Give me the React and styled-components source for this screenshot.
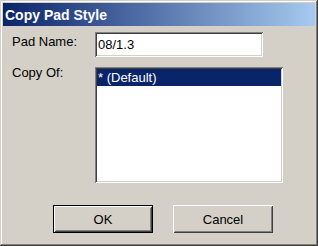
import styled, { createGlobalStyle } from "styled-components";

const GlobalStyle = createGlobalStyle`
  html, body {
    margin: 0;
    padding: 0;
    background: #d4d0c8;
  }
  body {
    font-family: "Liberation Sans", Arial, sans-serif;
    font-size: 13px;
    color: #000;
  }
`;

const Window = styled.div`
  width: 318px;
  height: 246px;
  box-sizing: border-box;
  padding: 3px;
  background: #d4d0c8;
  box-shadow: inset -1px -1px #404040, inset 1px 1px #d4d0c8,
    inset -2px -2px #808080, inset 2px 2px #ffffff;
  display: flex;
  flex-direction: column;
`;

const TitleBar = styled.div`
  height: 23px;
  padding-left: 2px;
  display: flex;
  align-items: center;
  background: linear-gradient(to right, #0a246a, #a6caf0);
  color: #ffffff;
  font-weight: bold;
  font-size: 14px;
`;

const Body = styled.div`
  padding: 6px 0 0 9px;
  display: grid;
  grid-template-columns: 83px 188px;
  row-gap: 10px;
`;

const Label = styled.div`
  line-height: 16px;
  margin-top: ${(props) => props.$offset}px;
`;

const TextInput = styled.div`
  width: 168px;
  height: 25px;
  box-sizing: border-box;
  background: #ffffff;
  box-shadow: inset 1px 1px #808080, inset -1px -1px #ffffff,
    inset 2px 2px #404040, inset -2px -2px #d4d0c8;
  padding: 0 3px;
  display: flex;
  align-items: center;
`;

const ListBox = styled.div`
  width: 188px;
  height: 116px;
  box-sizing: border-box;
  padding: 2px;
  background: #ffffff;
  box-shadow: inset 1px 1px #808080, inset -1px -1px #ffffff,
    inset 2px 2px #404040, inset -2px -2px #d4d0c8;
`;

const ListItem = styled.div`
  height: 17px;
  line-height: 17px;
  padding-left: 1px;
  background: ${(props) => (props.$selected ? "#0a246a" : "transparent")};
  color: ${(props) => (props.$selected ? "#ffffff" : "#000000")};
`;

const ButtonRow = styled.div`
  display: flex;
  gap: 20px;
  padding-left: 50px;
  margin-top: 22px;
`;

const Button = styled.button`
  width: 100px;
  height: 28px;
  box-sizing: border-box;
  border: ${(props) => (props.$default ? "1px solid #000000" : "none")};
  padding: 0;
  background: #d4d0c8;
  font-family: "Liberation Sans", Arial, sans-serif;
  font-size: 13px;
  color: #000;
  box-shadow: inset 1px 1px #ffffff, inset -1px -1px #404040,
    inset 2px 2px #d4d0c8, inset -2px -2px #808080;
`;

export default function App() {
  return (
    <>
      <GlobalStyle />
      <Window>
        <TitleBar>Copy Pad Style</TitleBar>
        <Body>
          <Label $offset={2}>Pad Name:</Label>
          <TextInput>08/1.3</TextInput>
          <Label $offset={-2}>Copy Of:</Label>
          <ListBox>
            <ListItem $selected>* (Default)</ListItem>
          </ListBox>
        </Body>
        <ButtonRow>
          <Button $default>OK</Button>
          <Button>Cancel</Button>
        </ButtonRow>
      </Window>
    </>
  );
}
